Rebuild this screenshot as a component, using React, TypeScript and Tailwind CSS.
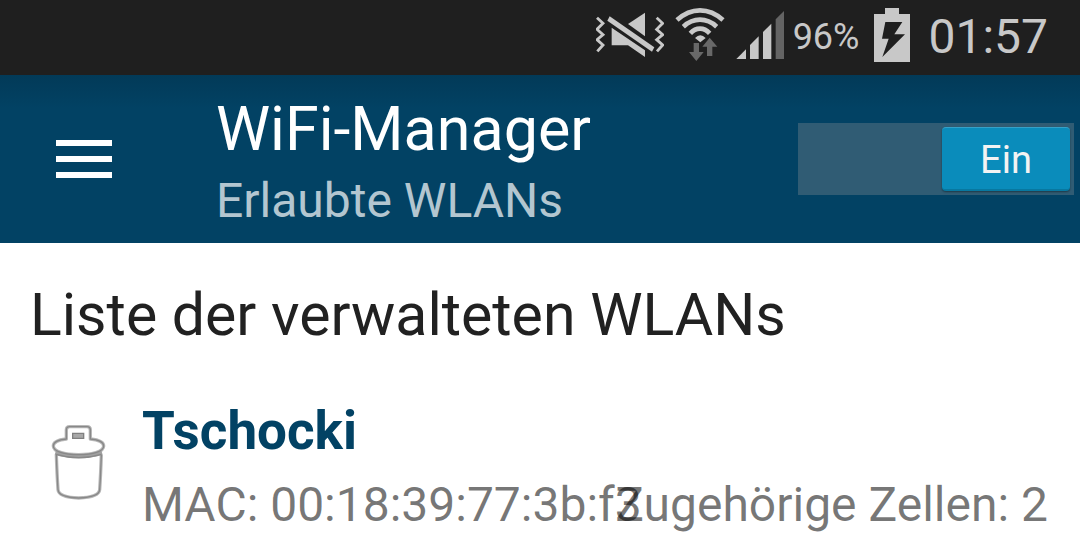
import { useState } from "react";

function MuteIcon() {
  return (
    <svg className="h-[46px] w-[68px] shrink-0" viewBox="51 39 204 138" fill="#c8c8c8" aria-label="Lautlos">
      <path d="M54 56 72 73 54 91 72 107 54 122 72 138 55 157" fill="none" stroke="#c8c8c8" strokeWidth="8.5" />
      <path d="M233 56 251 73 233 91 251 107 233 122 251 138 234 157" fill="none" stroke="#c8c8c8" strokeWidth="8.5" />
      <path d="M147 75 198 41V112Z" />
      <path d="M98 86 198 154V174L147 139H98Z" />
      <path d="M92 52 226 145 219 158 85 65Z" />
    </svg>
  );
}

function WifiIcon() {
  return (
    <svg className="h-[53px] w-[50px] shrink-0" viewBox="285 27 150 159" fill="none" stroke="#c8c8c8" strokeWidth="14" aria-label="WLAN">
      <path d="M291 63Q323 34 360 34T429 63" />
      <path d="M310 83Q333 62 360 62T410 83" />
      <path d="M331 103Q344 89 360 89T389 103" />
      <path d="M345 117Q361 101 377 117L361 130Z" fill="#c8c8c8" stroke="none" />
      <path d="M341 132H357V159H371L349 186 327 159H341Z" fill="#686868" stroke="none" />
      <path d="M389 116 412 143H397V171H381V143H367Z" fill="#686868" stroke="none" />
    </svg>
  );
}

function SignalIcon() {
  return (
    <svg className="h-[48px] w-[48px] shrink-0" viewBox="468 36 144 144" fill="#c8c8c8" aria-label="Mobilfunk">
      <path d="M469 180 498 151V180Z" />
      <path d="M510 180V138L536 112V180Z" />
      <path d="M549 180V99L574 74V180Z" />
      <path d="M587 180V61L612 36V180Z" fill="#646464" />
    </svg>
  );
}

function BatteryIcon() {
  return (
    <svg className="h-[54px] w-[36px] shrink-0" viewBox="282 24 108 162" fill="#c8c8c8" aria-label="Akku wird geladen">
      <path d="M315 24H357V42H390V186H282V42H315Z" />
      <path d="M316 66H367L343 103H375L307 171 326 116H306Z" fill="#1f1f1f" />
    </svg>
  );
}

function TrashIcon() {
  const body = "M79 164Q81 225 84 269Q86 292 146 294Q207 292 209 269Q212 225 214 164";
  const lid =
    "M109 117V90Q109 80 119 80H171Q181 80 181 90V117Q221 121 221 138C221 154 190 164 146 164S70 154 70 138Q70 121 109 117Z";
  return (
    <svg className="h-[75px] w-[55px]" viewBox="63 75 165 225" fill="none" aria-hidden="true">
      <g stroke="#b8b8b8" strokeWidth="10" strokeLinejoin="round">
        <path d={body} />
        <path d={lid} />
      </g>
      <path d="M76 158Q146 180 216 158" strokeWidth="13" stroke="#a0a0a0" />
      <g stroke="#888888" strokeWidth="4" strokeLinejoin="round">
        <path d={body} />
        <path d="M78 163Q146 183 214 163" />
        <path d={lid} />
      </g>
      <path d="M128 100H161V115H128Z" fill="#a8a8a8" stroke="#808080" strokeWidth="4" />
    </svg>
  );
}

function StatusBar() {
  return (
    <div className="flex h-[75px] items-center justify-end bg-[#1f1f1f] pr-8 pb-[6px] text-[#c8c8c8]">
      <div className="flex items-center gap-[11px]">
        <MuteIcon />
        <WifiIcon />
        <SignalIcon />
      </div>
      <span className="ml-[9px] pt-1 text-[36px] leading-none">96%</span>
      <div className="ml-[15px] flex items-center gap-[18px]">
        <BatteryIcon />
        <time className="pt-1 text-[48px] leading-none">01:57</time>
      </div>
    </div>
  );
}

function Toggle() {
  const [on, setOn] = useState(true);
  return (
    <button
      type="button"
      role="switch"
      aria-checked={on}
      aria-label="WiFi-Manager"
      onClick={() => setOn(!on)}
      className={`flex h-[72px] w-[276px] shrink-0 items-center bg-[#305c74] px-1 ${on ? "justify-end" : "justify-start"}`}
    >
      <span className="flex h-16 w-32 items-center justify-center rounded border-t border-b-2 border-t-[#35a1c8] border-b-[#0878a0] bg-[#0a8cbb] pt-1 text-[38px] text-[#f3f3f3] shadow-[0_1px_2px_rgba(0,0,0,0.4)]">
        {on ? "Ein" : "Aus"}
      </span>
    </button>
  );
}

export default function App() {
  return (
    <div className="min-h-screen bg-white font-['Roboto',sans-serif]">
      <StatusBar />
      <header className="flex items-center bg-[#024264] bg-linear-to-b from-[#023a58] to-[#024264] to-20% py-3 pr-[6px] pl-14">
        <button type="button" aria-label="Menü" className="flex w-14 shrink-0 flex-col gap-[10px]">
          <span className="h-[6px] bg-white" />
          <span className="h-[6px] bg-white" />
          <span className="h-[6px] bg-white" />
        </button>
        <div className="ml-[104px] min-w-0 flex-1 whitespace-nowrap">
          <h1 className="text-[61px] leading-[84px] text-white">WiFi-Manager</h1>
          <p className="text-[48px] leading-[60px] text-[#b3c6d0]">Erlaubte WLANs</p>
        </div>
        <Toggle />
      </header>
      <main className="pt-9 pr-8">
        <h2 className="pl-[30px] text-[59px] leading-[72px] text-[#212121]">Liste der verwalteten WLANs</h2>
        <ul className="mt-11">
          <li className="flex">
            <button type="button" aria-label="Tschocki löschen" className="mt-[30px] ml-[51px] h-[75px] shrink-0">
              <TrashIcon />
            </button>
            <div className="ml-9 min-w-0 flex-1">
              <h3 className="text-[53px] leading-[72px] font-bold text-[#024264]">Tschocki</h3>
              <div className="flex text-[48px] leading-[76px] whitespace-nowrap text-black/54">
                <span className="min-w-0 flex-1">MAC: 00:18:39:77:3b:f3</span>
                <span className="shrink-0">Zugehörige Zellen: 2</span>
              </div>
            </div>
          </li>
        </ul>
      </main>
    </div>
  );
}
